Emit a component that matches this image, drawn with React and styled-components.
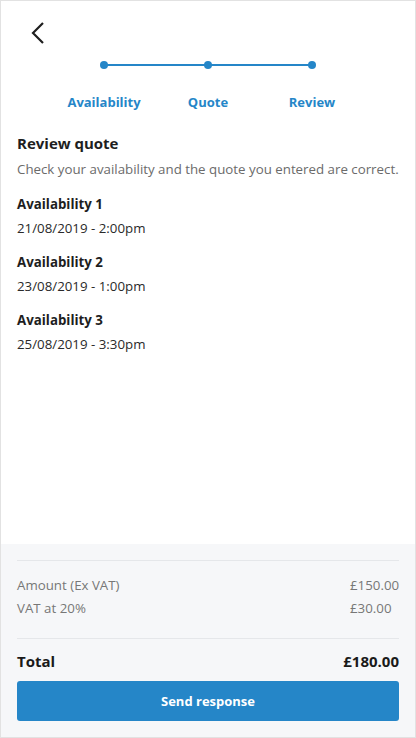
import React from 'react';
import styled, { createGlobalStyle } from 'styled-components';

const GlobalStyle = createGlobalStyle`
  html, body {
    margin: 0;
    padding: 0;
    background: #fff;
  }
  body {
    font-family: "Open Sans", "Noto Sans", sans-serif;
    color: #222;
  }
  * {
    box-sizing: border-box;
  }
`;

const Screen = styled.div`
  width: 416px;
  height: 738px;
  border: 1px solid #e2e2e2;
  display: flex;
  flex-direction: column;
  background: #fff;
`;
const Main = styled.div`
  flex: 1;
  padding: 0 16px;
`;
const BackButton = styled.button`
  display: block;
  margin: 20px 0 0 12px;
  padding: 0;
  border: 0;
  background: none;
  width: 18px;
  height: 24px;
  cursor: pointer;
`;
const Stepper = styled.div`
  display: grid;
  grid-template-columns: repeat(3, 104px);
  justify-content: center;
  margin: 16px 0 0 0;
`;
const Step = styled.div`
  display: flex;
  flex-direction: column;
  align-items: center;
  position: relative;
`;
const Dot = styled.span`
  width: 8px;
  height: 8px;
  border-radius: 50%;
  background: #2586c8;
  position: relative;
  z-index: 1;
`;
const Track = styled.span`
  position: absolute;
  top: 3px;
  left: 50%;
  width: 104px;
  height: 2px;
  background: #2586c8;
`;
const StepLabel = styled.span`
  margin-top: 24px;
  font-size: 13px;
  font-weight: 700;
  color: #2586c8;
`;
const Title = styled.h2`
  margin: 22px 0 0 0;
  font-size: 15px;
  font-weight: 700;
  line-height: 20px;
  color: #1e1e1e;
`;
const Subtitle = styled.p`
  margin: 6px 0 0 0;
  font-size: 13.3px;
  line-height: 20px;
  color: #6b6b6b;
`;
const List = styled.div`
  margin-top: 16px;
  display: flex;
  flex-direction: column;
  gap: 16px;
`;
const Item = styled.div``;
const ItemTitle = styled.div`
  font-size: 13.3px;
  font-weight: 700;
  line-height: 18px;
  color: #1e1e1e;
`;
const ItemValue = styled.div`
  margin-top: 6px;
  font-size: 13.3px;
  line-height: 18px;
  color: #2a2a2a;
`;
const Footer = styled.div`
  background: #f6f7f9;
  padding: 16px 16px 16px;
`;
const Divider = styled.hr`
  margin: 0;
  border: 0;
  height: 1px;
  background: #e5e7ea;
`;
const Rows = styled.div`
  padding: 13px 0 18px;
`;
const Row = styled.div`
  display: flex;
  justify-content: space-between;
  font-size: 13.3px;
  line-height: 23px;
  color: #777;
`;
const Amount = styled.span`
  width: 49px;
  white-space: nowrap;
`;
const TotalRow = styled.div`
  display: flex;
  justify-content: space-between;
  padding: 10px 0 8px;
  font-size: 15px;
  font-weight: 700;
  line-height: 24px;
  color: #1a1a1a;
`;
const SendButton = styled.button`
  display: block;
  width: 100%;
  height: 40px;
  border: 0;
  border-radius: 3px;
  background: #2586c8;
  color: #fff;
  font-family: inherit;
  font-size: 13px;
  font-weight: 700;
  cursor: pointer;
`;

const steps = ['Availability', 'Quote', 'Review'];
const availabilities = [
  { id: 1, value: '21/08/2019 - 2:00pm' },
  { id: 2, value: '23/08/2019 - 1:00pm' },
  { id: 3, value: '25/08/2019 - 3:30pm' },
];

const App = () => (
  <Screen>
    <GlobalStyle />
    <Main>
      <BackButton aria-label="Back">
        <svg width="18" height="24" viewBox="0 0 18 24">
          <path d="M14 2 L4 12 L14 22" fill="none" stroke="#1f1f1f" strokeWidth="2.2" />
        </svg>
      </BackButton>
      <Stepper>
        {steps.map((step, i) => (
          <Step key={step}>
            {i < steps.length - 1 && <Track />}
            <Dot />
            <StepLabel>{step}</StepLabel>
          </Step>
        ))}
      </Stepper>
      <Title>{'Review quote'}</Title>
      <Subtitle>{'Check your availability and the quote you entered are correct.'}</Subtitle>
      <List>
        {availabilities.map(a => (
          <Item key={a.id}>
            <ItemTitle>{`Availability ${a.id}`}</ItemTitle>
            <ItemValue>{a.value}</ItemValue>
          </Item>
        ))}
      </List>
    </Main>
    <Footer>
      <Divider />
      <Rows>
        <Row>
          <span>{'Amount (Ex VAT)'}</span>
          <Amount>{'£150.00'}</Amount>
        </Row>
        <Row>
          <span>{'VAT at 20%'}</span>
          <Amount>{'£30.00'}</Amount>
        </Row>
      </Rows>
      <Divider />
      <TotalRow>
        <span>{'Total'}</span>
        <span>{'£180.00'}</span>
      </TotalRow>
      <SendButton>{'Send response'}</SendButton>
    </Footer>
  </Screen>
);

export default App;
